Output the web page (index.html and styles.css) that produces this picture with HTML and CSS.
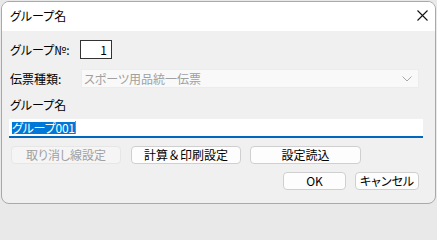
FILE: index.html
```html
<!DOCTYPE html>
<html lang="ja">
<head>
<meta charset="utf-8">
<title>グループ名</title>
<link rel="stylesheet" href="styles.css">
</head>
<body>
<div class="window">
  <div class="titlebar">
    <span class="title">グループ名</span>
    <svg class="close" width="11" height="11" viewBox="0 0 11 11"><path d="M0.5 0.5 L10.5 10.5 M10.5 0.5 L0.5 10.5" stroke="#111" stroke-width="1.1" fill="none"/></svg>
  </div>
  <div class="content">
    <div class="row row-no">
      <span class="label label-no">グループ№:</span>
      <span class="numbox">1</span>
    </div>
    <div class="row row-kind">
      <span class="label label-kind">伝票種類:</span>
      <span class="combo">
        <span class="combo-text">スポーツ用品統一伝票</span>
        <svg class="chev" width="10" height="6" viewBox="0 0 10 6"><path d="M0.5 0.5 L5 5 L9.5 0.5" stroke="#a8a8a8" stroke-width="1" fill="none"/></svg>
      </span>
    </div>
    <div class="row row-namelabel">
      <span class="label">グループ名</span>
    </div>
    <div class="row row-input">
      <span class="textinput"><span class="sel">グループ001</span><span class="caret"></span></span>
    </div>
    <div class="row row-buttons">
      <span class="btn btn-disabled btn-a">取り消し線設定</span>
      <span class="btn btn-b">計算<span class="amp">＆</span>印刷設定</span>
      <span class="btn btn-c">設定読込</span>
    </div>
    <div class="row row-ok">
      <span class="btn btn-ok">OK</span>
      <span class="btn btn-cancel">キャンセル</span>
    </div>
  </div>
</div>
</body>
</html>
```
FILE: styles.css
```css
html, body {
  margin: 0;
  padding: 0;
  background: #e9e9e9;
}
body {
  width: 437px;
  height: 205px;
  overflow: hidden;
  font-family: "Noto Sans CJK JP", "Noto Sans", sans-serif;
  font-size: 12px;
  font-feature-settings: "palt";
  color: #000;
}
.window {
  margin: 1px 0 0 1px;
  width: 435px;
  height: 203px;
  box-sizing: border-box;
  border: 1px solid #a9a9a9;
  border-radius: 8px;
  overflow: hidden;
  background: #f0f0f0;
  display: flex;
  flex-direction: column;
}
.titlebar {
  height: 29px;
  flex: none;
  background: #ffffff;
  display: flex;
  align-items: center;
  justify-content: space-between;
  padding: 0 7px 0 8px;
}
.title {
  font-size: 12px;
  line-height: 14px;
  margin-top: -1px;
}
.close {
  margin-top: -2px;
}
.content {
  padding-left: 8px;
  display: flex;
  flex-direction: column;
}
.row {
  display: flex;
  align-items: center;
}
.label {
  line-height: 16px;
  white-space: nowrap;
}
.row-no {
  margin-top: 9px;
  height: 19px;
}
.label-no {
  width: 70px;
}
.numbox {
  width: 32px;
  height: 19px;
  box-sizing: border-box;
  border: 1px solid #333;
  background: #fff;
  text-align: right;
  padding-right: 4px;
  line-height: 17px;
}
.row-kind {
  margin-top: 10px;
  height: 19px;
}
.label-kind {
  width: 71px;
}
.combo {
  width: 338px;
  height: 19px;
  box-sizing: border-box;
  border: 1px solid #ececec;
  background: #f9f9f9;
  display: flex;
  align-items: center;
  justify-content: space-between;
  padding: 0 6px 0 2px;
}
.combo-text {
  color: #a0a0a0;
  line-height: 17px;
}
.chev {
  margin-top: 1px;
}
.row-namelabel {
  margin-top: 9px;
  height: 16px;
}
.row-input {
  margin-top: 6px;
  height: 19px;
  margin-left: -1px;
}
.textinput {
  width: 414px;
  height: 19px;
  box-sizing: border-box;
  background: #fff;
  border-bottom: 2px solid #0067c0;
  display: flex;
  align-items: center;
  padding-left: 3px;
}
.sel {
  background: #0078d7;
  color: #fff;
  line-height: 12px;
  height: 12px;
  display: inline-block;
  letter-spacing: -0.2px;
}
.caret {
  display: inline-block;
  width: 1px;
  height: 13px;
  background: #d27b1e;
}
.row-buttons {
  margin-top: 8px;
  height: 18px;
  margin-left: 1px;
  gap: 10px;
}
.btn {
  height: 18px;
  box-sizing: border-box;
  border: 1px solid #cfcfcf;
  border-radius: 4px;
  background: #fdfdfd;
  display: flex;
  align-items: center;
  justify-content: center;
  line-height: 16px;
  white-space: nowrap;
}
.amp {
  font-feature-settings: normal;
}
.btn-a { width: 110px; }
.btn-b { width: 110px; }
.btn-c { width: 111px; margin-left: -1px; }
.btn-disabled {
  background: #f5f5f5;
  border-color: #e6e6e6;
  color: #a0a0a0;
}
.row-ok {
  margin-top: 8px;
  height: 18px;
  width: 409px;
  justify-content: flex-end;
  gap: 9px;
}
.btn-ok { width: 63px; }
.btn-cancel { width: 64px; }
```
